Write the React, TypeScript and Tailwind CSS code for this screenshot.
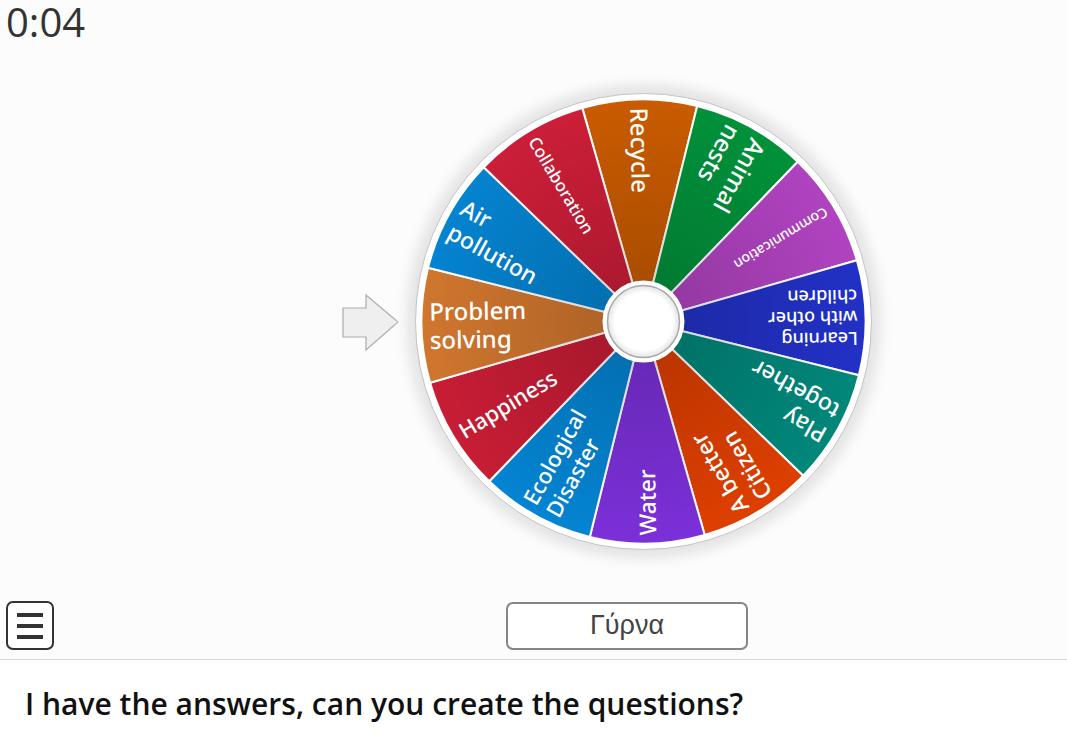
import React from "react";

type Segment = {
    lines: string[];
    color: string;
    size: number;
};

const segments: Segment[] = [
    { lines: ["Recycle"], color: "#c95b00", size: 24 },
    { lines: ["Animal", "nests"], color: "#01913a", size: 24 },
    { lines: ["Communication"], color: "#b043c0", size: 14 },
    { lines: ["Learning", "with other", "children"], color: "#2231c6", size: 18 },
    { lines: ["Play", "together"], color: "#01877a", size: 23 },
    { lines: ["A better", "Citizen"], color: "#de3f00", size: 23 },
    { lines: ["Water"], color: "#7b30d8", size: 23 },
    { lines: ["Ecological", "Disaster"], color: "#0484d2", size: 22 },
    { lines: ["Happiness"], color: "#c71d35", size: 22 },
    { lines: ["Problem", "solving"], color: "#d0762e", size: 24 },
    { lines: ["Air", "pollution"], color: "#0483d0", size: 23 },
    { lines: ["Collaboration"], color: "#cc1e38", size: 17 },
];

const CX = 303.5;
const CY = 261.5;
const R = 222;

function pt(angle: number, r: number) {
    const a = (angle * Math.PI) / 180;
    return [CX + r * Math.cos(a), CY + r * Math.sin(a)];
}

function Wheel() {
    return (
        <svg width="600" height="530" viewBox="0 0 600 530" className="block">
            <defs>
                <radialGradient id="glow" cx={CX} cy={CY} r="250" gradientUnits="userSpaceOnUse">
                    <stop offset="0.88" stopColor="#dcdcdc" />
                    <stop offset="0.94" stopColor="#ececec" />
                    <stop offset="1" stopColor="#fafafa" stopOpacity="0" />
                </radialGradient>
                <radialGradient id="shade" cx={CX} cy={CY} r={R} gradientUnits="userSpaceOnUse">
                    <stop offset="0.15" stopColor="#000" stopOpacity="0.16" />
                    <stop offset="1" stopColor="#000" stopOpacity="0" />
                </radialGradient>
                <radialGradient id="hub" cx={CX} cy={CY} r="36" gradientUnits="userSpaceOnUse">
                    <stop offset="0.8" stopColor="#ffffff" />
                    <stop offset="1" stopColor="#e4e4e4" />
                </radialGradient>
            </defs>

            {/* pointer */}
            <polygon
                points="3,248 26,248 26,235 58,262 26,290 26,277 3,277"
                fill="#efefef"
                stroke="#ababab"
                strokeWidth="1.2"
            />

            <circle cx={CX} cy={CY} r="250" fill="url(#glow)" />
            <circle cx={CX} cy={CY} r="228" fill="#ffffff" stroke="#c4c4c4" strokeWidth="1" />

            {segments.map((s, i) => {
                const mid = 269 + i * 30;
                const [x1, y1] = pt(mid - 15, R);
                const [x2, y2] = pt(mid + 15, R);
                return (
                    <path
                        key={i}
                        d={`M${CX} ${CY} L${x1} ${y1} A${R} ${R} 0 0 1 ${x2} ${y2} Z`}
                        fill={s.color}
                        stroke="#ffffff"
                        strokeWidth="2"
                        strokeLinejoin="round"
                    />
                );
            })}
            <circle cx={CX} cy={CY} r={R} fill="url(#shade)" />

            {segments.map((s, i) => {
                const mid = 269 + i * 30;
                const lh = s.size * 1.18;
                return (
                    <g key={i} transform={`translate(${CX} ${CY}) rotate(${mid - 180})`}>
                        {s.lines.map((line, j) => (
                            <text
                                key={j}
                                x={-214}
                                y={(j - (s.lines.length - 1) / 2) * lh}
                                dominantBaseline="central"
                                fill="#ffffff"
                                fontSize={s.size}
                                fontWeight={500}
                                fontFamily="'Noto Sans', 'Open Sans', sans-serif"
                            >
                                {line}
                            </text>
                        ))}
                    </g>
                );
            })}

            <circle cx={CX} cy={CY} r="41" fill="#ffffff" />
            <circle cx={CX} cy={CY} r="36" fill="url(#hub)" stroke="#a8a8a8" strokeWidth="1.5" />
        </svg>
    );
}

export default function App() {
    return (
        <div className="w-[1067px] h-[745px] bg-white overflow-hidden font-['Open_Sans',sans-serif]">
            <div className="h-[660px] bg-[#fcfcfc] border-b border-[#d9d9d9] flex flex-col">
                <div className="pl-[6px] h-[60px] text-[40px] leading-[48px] -mt-[2px] text-[#333333]">0:04</div>
                <div className="ml-[340px] mt-[2px]">
                    <Wheel />
                </div>
                <div className="flex items-center pl-[6px] mt-[11px]">
                    <button className="w-[48px] h-[49px] rounded-[7px] border-2 border-[#333333] bg-white flex flex-col items-center justify-center gap-[7px]">
                        <span className="block w-[26px] h-[4px] bg-[#333333]" />
                        <span className="block w-[26px] h-[4px] bg-[#333333]" />
                        <span className="block w-[26px] h-[4px] bg-[#333333]" />
                    </button>
                    <button className="ml-[452px] w-[242px] h-[48px] rounded-[7px] border-2 border-[#858585] bg-white text-[27px] leading-none text-[#444444] font-['Liberation_Sans',sans-serif]">
                        Γύρνα
                    </button>
                </div>
            </div>
            <div className="pl-[25px] pt-[21px] text-[30px] font-semibold text-[#111111]">
                I have the answers, can you create the questions?
            </div>
        </div>
    );
}
